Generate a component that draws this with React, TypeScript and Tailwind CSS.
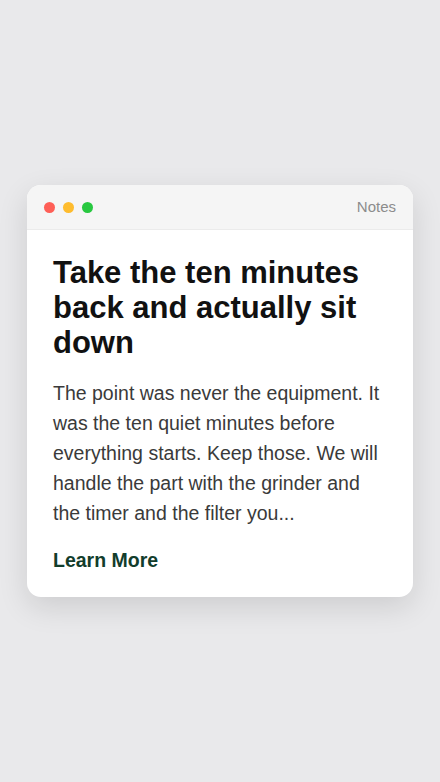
import React from 'react';

const dots = ['bg-[#fe5f57]', 'bg-[#febc2e]', 'bg-[#28c840]'];

function App() {
  return (
    <div
      className="min-h-screen bg-[#e9e9eb] flex items-center justify-center px-[27px]"
      style={{ fontFamily: '"Liberation Sans", Arial, sans-serif' }}
    >
      <div className="w-full bg-white rounded-[14px] overflow-hidden shadow-[0_10px_30px_rgba(0,0,0,0.12)]">
        <div className="h-[45px] bg-[#f5f5f5] border-b border-[#ebebeb] flex items-center justify-between pl-[17px] pr-[17px]">
          <div className="flex gap-[8px]">
            {dots.map((c) => (
              <span key={c} className={`block w-[11px] h-[11px] rounded-full ${c}`} />
            ))}
          </div>
          <span className="text-[15px] text-[#8c8c8c]">Notes</span>
        </div>
        <div className="px-[26px] pt-[25px] pb-[23px]">
          <h1 className="text-[31px] leading-[35px] font-bold text-[#111111]">
            Take the ten minutes back and actually sit down
          </h1>
          <p className="mt-[18px] text-[19.5px] leading-[30px] text-[#3a3a3a]">
            The point was never the equipment. It was the ten quiet minutes before everything starts. Keep those. We will handle the part with the grinder and the timer and the filter you...
          </p>
          <a href="#" className="block mt-[18px] text-[19.5px] leading-[28px] font-bold text-[#123d2c]">
            Learn More
          </a>
        </div>
      </div>
    </div>
  );
}

export default App;
